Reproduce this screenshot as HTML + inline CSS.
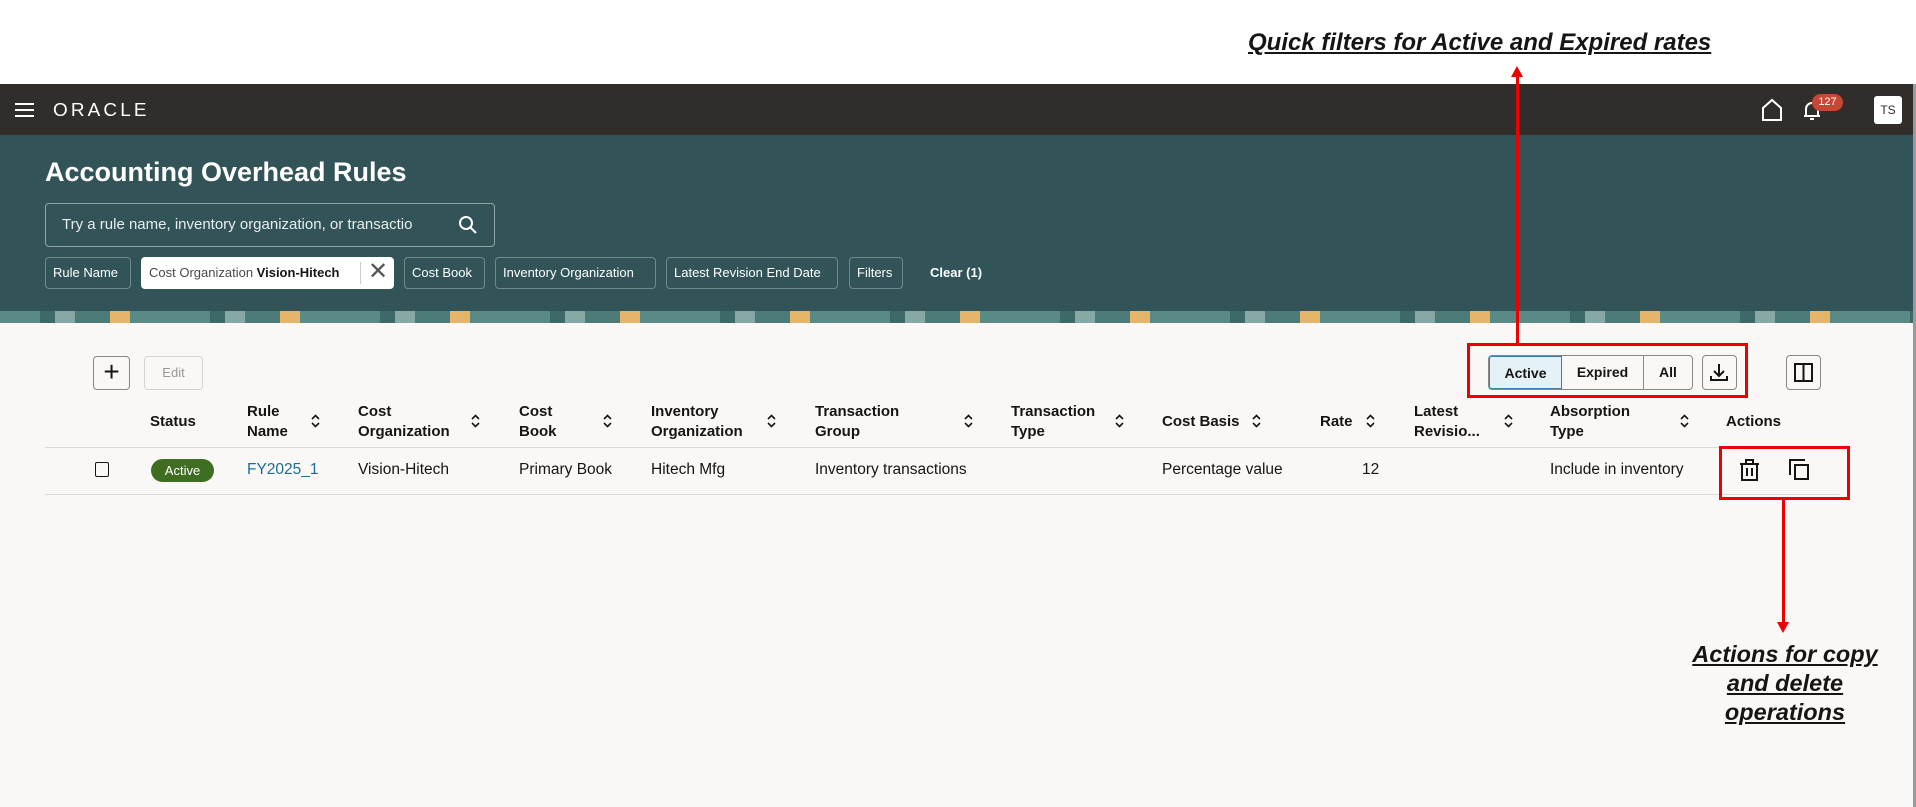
<!DOCTYPE html>
<html><head><meta charset="utf-8"><style>
*{margin:0;padding:0;box-sizing:border-box}
body{width:1916px;height:807px;position:relative;overflow:hidden;background:#fff;font-family:"Liberation Sans",sans-serif;color:#161513}
.a{position:absolute}
.bar{left:0;top:84px;width:1916px;height:51px;background:#312d2a}
.teal{left:0;top:135px;width:1916px;height:176px;background:#325358}
.strip{left:0;top:311px;width:1916px;height:12px;background:repeating-linear-gradient(90deg,#5a8a86 0 40px,#3d6a68 40px 55px,#86a9a6 55px 75px,#4c7b78 75px 110px,#e5b56a 110px 130px,#5a8a86 130px 170px)}
.main{left:0;top:323px;width:1913px;height:484px;background:#f9f8f6}
.edge{left:1913px;top:84px;width:3px;height:723px;background:#9a9a9a}
.chip{top:257px;height:32px;border:1px solid #6f8a8c;border-radius:4px;color:#fff;font-size:13px;line-height:30px;padding:0 7px;white-space:nowrap}
.h{font-size:15px;font-weight:bold;line-height:20px;color:#161513}
.c{font-size:15.5px;top:461px;color:#161513}
.sort{width:9px;height:14px}
.btn{border:1px solid #8a8784;border-radius:4px;background:#f9f8f6}
.red{border:3px solid #e00;}
</style></head><body>
<div class="a" style="left:1248px;top:29px;font-size:24px;font-weight:bold;font-style:italic;text-decoration:underline;white-space:nowrap">Quick filters for Active and Expired rates</div>
<div class="a bar"></div>
<div class="a teal"></div>
<div class="a strip"></div>
<div class="a main"></div>
<div class="a edge"></div>
<div class="a" style="left:15px;top:103px;width:19px;height:2px;background:#fff;box-shadow:0 6px 0 #fff,0 12px 0 #fff"></div>
<div class="a" style="left:53px;top:100px;color:#fff;font-size:18px;letter-spacing:3px;transform:scaleX(1.05);transform-origin:left">ORACLE</div>
<svg class="a" style="left:1760px;top:98px" width="24" height="24" viewBox="0 0 24 24"><path d="M3 22V10L12 2 21 10V22Z" fill="none" stroke="#fff" stroke-width="2"/></svg>
<svg class="a" style="left:1800px;top:98px" width="24" height="24" viewBox="0 0 24 24"><path d="M4 18h16M6 18V11a6 6 0 0 1 12 0v7M10 21h4" fill="none" stroke="#fff" stroke-width="2"/></svg>
<div class="a" style="left:1812px;top:94px;width:31px;height:17px;border-radius:9px;background:#c74634;color:#fff;font-size:11px;text-align:center;line-height:17px">127</div>
<div class="a" style="left:1874px;top:96px;width:28px;height:28px;border-radius:3px;background:#fff;font-size:12px;text-align:center;line-height:28px;color:#312d2a">TS</div>
<div class="a" style="left:45px;top:157px;color:#fff;font-size:27px;font-weight:bold">Accounting Overhead Rules</div>
<div class="a" style="left:45px;top:203px;width:450px;height:44px;border:1px solid #8fa6a8;border-radius:4px;color:#e8eeee;font-size:15px;line-height:42px;padding-left:16px">Try a rule name, inventory organization, or transactio</div>
<svg class="a" style="left:458px;top:215px" width="20" height="20" viewBox="0 0 20 20"><circle cx="8" cy="8" r="6" fill="none" stroke="#fff" stroke-width="2"/><path d="M12.5 12.5L18 18" stroke="#fff" stroke-width="2"/></svg>
<div class="a chip" style="left:45px;width:86px">Rule Name</div>
<div class="a chip" style="left:141px;width:253px;background:#fff;border-color:#fff;color:#4a4a4a">Cost Organization <b style="color:#161513">Vision-Hitech</b></div>
<div class="a" style="left:360px;top:262px;width:1px;height:22px;background:#ccc"></div>
<div class="a" style="left:368px;top:258px;font-size:24px;color:#555;line-height:28px">✕</div>
<div class="a chip" style="left:404px;width:81px">Cost Book</div>
<div class="a chip" style="left:495px;width:161px">Inventory Organization</div>
<div class="a chip" style="left:666px;width:172px">Latest Revision End Date</div>
<div class="a chip" style="left:849px;width:54px">Filters</div>
<div class="a" style="left:930px;top:265px;color:#fff;font-size:13px;font-weight:bold">Clear (1)</div>
<div class="a btn" style="left:93px;top:356px;width:37px;height:34px;font-size:28px;text-align:center;line-height:30px">+</div>
<div class="a btn" style="left:144px;top:356px;width:59px;height:34px;border-color:#d5d3d0;color:#9a9896;font-size:13px;text-align:center;line-height:32px">Edit</div>
<div class="a" style="left:1488px;top:355px;width:205px;height:35px;border:1px solid #8a8784;border-radius:4px;display:flex;font-size:14px;font-weight:bold;line-height:33px;text-align:center">
<div style="width:73px;background:#e4f1f7;border:1px solid #3d7fa6;border-radius:3px 0 0 3px">Active</div>
<div style="width:82px;border-right:1px solid #8a8784">Expired</div><div style="flex:1">All</div></div>
<div class="a btn" style="left:1702px;top:355px;width:35px;height:35px"></div>
<svg class="a" style="left:1709px;top:362px" width="20" height="20" viewBox="0 0 20 20"><path d="M10 2v11M5 9l5 5 5-5M2 14v4h16v-4" fill="none" stroke="#161513" stroke-width="2"/></svg>
<div class="a btn" style="left:1786px;top:355px;width:35px;height:35px"></div>
<svg class="a" style="left:1794px;top:363px" width="19" height="19" viewBox="0 0 19 19"><rect x="1" y="1" width="17" height="17" fill="none" stroke="#161513" stroke-width="2"/><path d="M9.5 1v17" stroke="#161513" stroke-width="2"/></svg>
<div class="a red" style="left:1467px;top:343px;width:281px;height:55px"></div>
<div class="a" style="left:1516px;top:74px;width:3px;height:270px;background:#e00"></div>
<div class="a" style="left:1511px;top:66px;width:0;height:0;border-left:6px solid transparent;border-right:6px solid transparent;border-bottom:11px solid #e00"></div>
<div class="a h" style="left:150px;top:412px">Status</div>
<div class="a h" style="left:247px;top:402px">Rule<br>Name</div>
<div class="a h" style="left:358px;top:402px">Cost<br>Organization</div>
<div class="a h" style="left:519px;top:402px">Cost<br>Book</div>
<div class="a h" style="left:651px;top:402px">Inventory<br>Organization</div>
<div class="a h" style="left:815px;top:402px">Transaction<br>Group</div>
<div class="a h" style="left:1011px;top:402px">Transaction<br>Type</div>
<div class="a h" style="left:1162px;top:412px">Cost Basis</div>
<div class="a h" style="left:1320px;top:412px">Rate</div>
<div class="a h" style="left:1414px;top:402px">Latest<br>Revisio...</div>
<div class="a h" style="left:1550px;top:402px">Absorption<br>Type</div>
<div class="a h" style="left:1726px;top:412px">Actions</div>
<svg width="0" height="0" style="position:absolute"><defs><g id="s"><path d="M1 5l3.5-3.5L8 5M1 9l3.5 3.5L8 9" fill="none" stroke="#161513" stroke-width="1.6"/></g></defs></svg>
<svg class="a sort" style="left:311px;top:414px"><use href="#s"/></svg>
<svg class="a sort" style="left:471px;top:414px"><use href="#s"/></svg>
<svg class="a sort" style="left:603px;top:414px"><use href="#s"/></svg>
<svg class="a sort" style="left:767px;top:414px"><use href="#s"/></svg>
<svg class="a sort" style="left:964px;top:414px"><use href="#s"/></svg>
<svg class="a sort" style="left:1115px;top:414px"><use href="#s"/></svg>
<svg class="a sort" style="left:1252px;top:414px"><use href="#s"/></svg>
<svg class="a sort" style="left:1366px;top:414px"><use href="#s"/></svg>
<svg class="a sort" style="left:1504px;top:414px"><use href="#s"/></svg>
<svg class="a sort" style="left:1680px;top:414px"><use href="#s"/></svg>
<div class="a" style="left:45px;top:447px;width:1795px;height:1px;background:#dcdad7"></div>
<div class="a" style="left:45px;top:494px;width:1795px;height:1px;background:#dcdad7"></div>
<div class="a" style="left:95px;top:462px;width:14px;height:15px;border:1.5px solid #161513;border-radius:2px"></div>
<div class="a" style="left:151px;top:459px;width:63px;height:23px;border-radius:12px;background:#3f6e22;color:#fff;font-size:13px;text-align:center;line-height:23px">Active</div>
<div class="a c" style="left:247px;color:#1b6d95">FY2025_1</div>
<div class="a c" style="left:358px">Vision-Hitech</div>
<div class="a c" style="left:519px">Primary Book</div>
<div class="a c" style="left:651px">Hitech Mfg</div>
<div class="a c" style="left:815px">Inventory transactions</div>
<div class="a c" style="left:1162px">Percentage value</div>
<div class="a c" style="left:1362px">12</div>
<div class="a c" style="left:1550px">Include in inventory</div>
<svg class="a" style="left:1739px;top:459px" width="21" height="22" viewBox="0 0 21 22"><path d="M1 5h19M7 5V1h7v4M3 5v16h15V5M8 9v8M13 9v8" fill="none" stroke="#161513" stroke-width="2"/></svg>
<svg class="a" style="left:1789px;top:459px" width="21" height="22" viewBox="0 0 21 22"><path d="M1 16V1h15" fill="none" stroke="#161513" stroke-width="2"/><rect x="6" y="6" width="13" height="14" fill="none" stroke="#161513" stroke-width="2"/></svg>
<div class="a red" style="left:1719px;top:446px;width:131px;height:54px"></div>
<div class="a" style="left:1782px;top:500px;width:3px;height:124px;background:#e00"></div>
<div class="a" style="left:1777px;top:622px;width:0;height:0;border-left:6px solid transparent;border-right:6px solid transparent;border-top:11px solid #e00"></div>
<div class="a" style="left:1670px;top:640px;width:230px;text-align:center;font-size:23.5px;font-weight:bold;font-style:italic;text-decoration:underline;line-height:29px">Actions for copy<br>and delete<br>operations</div>
</body></html>
